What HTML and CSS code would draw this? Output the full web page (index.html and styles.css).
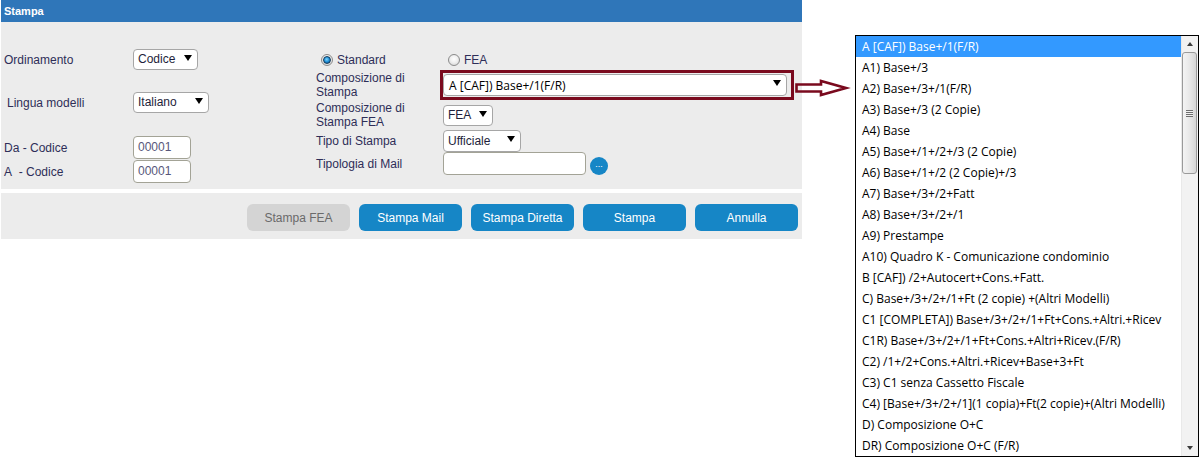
FILE: index.html
```html
<!DOCTYPE html>
<html>
<head>
<meta charset="utf-8">
<link rel="stylesheet" href="styles.css">
</head>
<body>
<div class="page">
  <div class="panel">
    <div class="hdr">Stampa</div>
    <div class="form">
      <div class="col-left">
        <div class="frow r1"><span class="lbl">Ordinamento</span><div class="sel w-codice"><span>Codice</span><i class="tri"></i></div></div>
        <div class="frow r2"><span class="lbl ind">Lingua modelli</span><div class="sel w-ital"><span>Italiano</span><i class="tri"></i></div></div>
        <div class="frow r3"><span class="lbl">Da - Codice</span><div class="inp w-cod">00001</div></div>
        <div class="frow r4"><span class="lbl">A&nbsp; - Codice</span><div class="inp w-cod">00001</div></div>
      </div>
      <div class="col-right">
        <div class="rrow radios">
          <label class="radio-opt"><span class="radio checked"></span>Standard</label>
          <label class="radio-opt"><span class="radio"></span>FEA</label>
        </div>
        <div class="rrow comp">
          <span class="rlbl two">Composizione di<br>Stampa</span>
          <div class="hl-box"><div class="sel w-comp list-font"><span>A [CAF]) Base+/1(F/R)</span><i class="tri"></i></div></div>
        </div>
        <div class="rrow fea">
          <span class="rlbl two">Composizione di<br>Stampa FEA</span>
          <div class="sel w-fea"><span>FEA</span><i class="tri"></i></div>
        </div>
        <div class="rrow tipo">
          <span class="rlbl">Tipo di Stampa</span>
          <div class="sel w-uff"><span>Ufficiale</span><i class="tri"></i></div>
        </div>
        <div class="rrow mail">
          <span class="rlbl">Tipologia di Mail</span>
          <div class="inp w-mail"></div>
          <span class="dots">...</span>
        </div>
      </div>
    </div>
    <div class="btnbar">
      <span class="btn disabled">Stampa FEA</span>
      <span class="btn">Stampa Mail</span>
      <span class="btn">Stampa Diretta</span>
      <span class="btn">Stampa</span>
      <span class="btn">Annulla</span>
    </div>
  </div>

  <svg class="arrow" width="60" height="22" viewBox="0 0 60 22">
    <polygon points="2.5,6.5 27,6.5 27,3 52,10 27,17 27,13.5 2.5,13.5" fill="none" stroke="#7a0a1e" stroke-width="2.6" stroke-linejoin="miter"/>
  </svg>

  <div class="dropdown list-font">
    <ul class="items">
      <li class="selected">A [CAF]) Base+/1(F/R)</li>
      <li>A1) Base+/3</li>
      <li>A2) Base+/3+/1(F/R)</li>
      <li>A3) Base+/3 (2 Copie)</li>
      <li>A4) Base</li>
      <li>A5) Base+/1+/2+/3 (2 Copie)</li>
      <li>A6) Base+/1+/2 (2 Copie)+/3</li>
      <li>A7) Base+/3+/2+Fatt</li>
      <li>A8) Base+/3+/2+/1</li>
      <li>A9) Prestampe</li>
      <li>A10) Quadro K - Comunicazione condominio</li>
      <li>B [CAF]) /2+Autocert+Cons.+Fatt.</li>
      <li>C) Base+/3+/2+/1+Ft (2 copie) +(Altri Modelli)</li>
      <li>C1 [COMPLETA]) Base+/3+/2+/1+Ft+Cons.+Altri.+Ricev</li>
      <li>C1R) Base+/3+/2+/1+Ft+Cons.+Altri+Ricev.(F/R)</li>
      <li>C2) /1+/2+Cons.+Altri.+Ricev+Base+3+Ft</li>
      <li>C3) C1 senza Cassetto Fiscale</li>
      <li>C4) [Base+/3+/2+/1](1 copia)+Ft(2 copie)+(Altri Modelli)</li>
      <li>D) Composizione O+C</li>
      <li>DR) Composizione O+C (F/R)</li>
    </ul>
    <div class="sbar">
      <div class="sb-btn"><i class="sb-up"></i></div>
      <div class="sb-thumb"><i class="grip"></i></div>
      <div class="sb-track"></div>
      <div class="sb-btn"><i class="sb-down"></i></div>
    </div>
  </div>
</div>
</body>
</html>
```

FILE: styles.css
```css
* { box-sizing: border-box; }
html, body { margin: 0; padding: 0; background: #fff; }
body { font-family: "Liberation Sans", Arial, sans-serif; font-size: 12px; color: #2e2e58; }

.page { position: relative; width: 1202px; height: 466px; }

.panel { width: 801px; margin-left: 1px; }

.hdr {
  height: 22px; background: #2f76b9; color: #fff;
  font-weight: bold; font-size: 11px; line-height: 22px; padding-left: 3px;
}

.form { height: 167px; background: #ececec; display: flex; padding-left: 3px; }

.col-left { width: 312px; display: flex; flex-direction: column; }
.frow { display: flex; align-items: center; }
.lbl { width: 129px; }
.lbl.ind { padding-left: 3px; }
.r1 { margin-top: 27px; height: 21px; }
.r2 { margin-top: 22px; height: 21px; }
.r3 { margin-top: 23px; height: 23px; }
.r4 { margin-top: 1px; height: 23px; }

.sel {
  height: 21px; background: #fff; border: 1px solid #a6a6a6; border-radius: 4px;
  display: flex; align-items: center; padding-left: 4px; color: #1e1e3a;
}
.sel span { line-height: 19px; }
.tri {
  margin-left: auto; margin-right: 5px; align-self: flex-start; margin-top: 5px;
  width: 0; height: 0; border-left: 4px solid transparent; border-right: 4px solid transparent;
  border-top: 6px solid #000;
}
.w-codice { width: 65px; }
.w-ital { width: 76px; }
.w-fea { width: 50px; }
.w-uff { width: 78px; height: 22px; }
.w-comp { width: 344px; height: 22px; }

.inp {
  height: 23px; background: #fff; border: 1px solid #a3a396; border-radius: 4px;
  padding-left: 4px; line-height: 21px; color: #57577a;
}
.w-cod { width: 58px; }
.w-mail { width: 143px; }

.col-right { display: flex; flex-direction: column; padding-top: 30px; }
.rrow { display: flex; align-items: center; }
.rlbl { width: 127px; }
.rlbl.two { line-height: 14px; }
.radios { height: 16px; padding-left: 5px; }
.radio-opt { display: flex; align-items: center; width: 127px; }
.radio {
  width: 12px; height: 12px; border-radius: 50%; margin-right: 4px;
  border: 1px solid #8b8b8b;
  background: radial-gradient(circle at 50% 40%, #ffffff 0%, #f0f0f0 45%, #cfcfcf 100%);
  display: flex; align-items: center; justify-content: center;
}
.radio.checked::after {
  content: ""; width: 6px; height: 6px; border-radius: 50%;
  background: radial-gradient(circle at 45% 40%, #7fd6ff 0%, #1f8fd6 50%, #0d3f73 100%);
  border: 0.5px solid #123a5a;
}
.comp { margin-top: 2px; height: 30px; align-items: flex-start; }
.comp .rlbl { padding-top: 1px; }
.hl-box {
  margin-left: -3px; border: 3px solid #7a0a1e; padding: 1px 4px 1px 0; height: 30px;
}
.list-font { font-family: "Open Sans", "Segoe UI", sans-serif; font-size: 12px; color: #000; }
.w-comp span { padding-left: 1px; }
.fea { margin-top: 1px; height: 28px; }
.tipo { margin-top: 1px; height: 22px; }
.mail { height: 23px; }
.dots {
  width: 18px; height: 18px; border-radius: 50%; background: #1686c6; color: #fff;
  margin-left: 4px; align-self: flex-end; font-size: 9px; line-height: 14px; text-align: center;
}

.btnbar {
  margin-top: 4px; height: 46px; background: #ececec; display: flex; justify-content: flex-end;
  gap: 9px; padding: 11px 4px 0 0;
}
.btn {
  width: 103px; height: 27px; border-radius: 6px; background: #1686c6; color: #fff;
  display: flex; align-items: center; justify-content: center; font-size: 12px;
}
.btn.disabled { background: #d4d4d4; color: #6a6a6a; }

.arrow { position: absolute; left: 794px; top: 78px; }

.dropdown {
  position: absolute; left: 855px; top: 35px; width: 344px; height: 422px;
  border: 1px solid #000; background: #fff; display: flex;
}
.items { list-style: none; margin: 0; padding: 0; flex: 1; overflow: hidden; }
.items li { height: 21px; line-height: 21px; padding-left: 6px; white-space: nowrap; }
.items li.selected { background: #3399ff; color: #fff; }

.sbar {
  width: 17px; background: #f2f2f2; border-left: 1px solid #e9e9e9;
  display: flex; flex-direction: column;
}
.sb-btn { height: 16px; display: flex; align-items: center; justify-content: center; }
.sb-up { width: 0; height: 0; border-left: 3.5px solid transparent; border-right: 3.5px solid transparent; border-bottom: 4px solid #3c3c3c; }
.sb-down { width: 0; height: 0; border-left: 3.5px solid transparent; border-right: 3.5px solid transparent; border-top: 4px solid #3c3c3c; }
.sb-thumb {
  height: 122px; margin: 0 1px 0 0; border: 1px solid #9a9a9a; border-radius: 3px;
  background: linear-gradient(to right, #f4f4f4 0%, #e8e8e8 50%, #d6d6d6 100%);
  display: flex; align-items: center; justify-content: center;
}
.grip {
  width: 7px; height: 7px;
  background: repeating-linear-gradient(to bottom, #6e6e6e 0 1px, #f0f0f0 1px 2px);
}
.sb-track { flex: 1; }
```
